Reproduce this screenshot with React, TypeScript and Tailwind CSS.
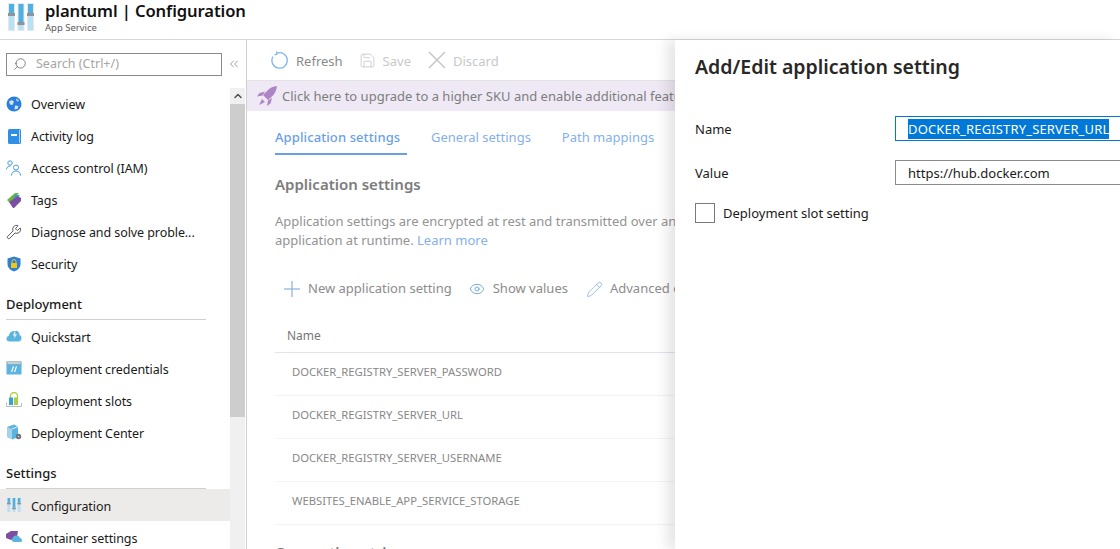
import { ReactNode } from "react";
import { Search, ChevronsLeft, ChevronUp, Eye, Pencil, Save, Wrench } from "lucide-react";

const SlidersIcon = ({ w, h }: { w: number; h: number }) => (
  <svg width={w} height={h} viewBox="0 0 26 28">
    {[0, 9.5, 19].map((x, i) => {
      const handle = i === 1 ? 19 : 10;
      return (
        <g key={x}>
          <rect x={x} y="0" width="7" height="28" fill="#e6e9eb" />
          <rect x={x + 1} y="1" width="5" height={handle - 1} fill="#4fb0e2" />
          <rect x={x + 1} y={handle + 3} width="5" height={24 - handle} fill="#b9e0f4" />
          <rect x={x} y={handle} width="7" height="3" fill="#8f9498" />
        </g>
      );
    })}
  </svg>
);

const OverviewIcon = () => (
  <svg width="16" height="16" viewBox="0 0 16 16">
    <circle cx="8" cy="8" r="7.500" fill="#2b7fdc" />
    <path d="M3 5.500 6 4l2 2-1.500 3L4 8.500z" fill="#cfe6fa" />
    <path d="M10 2.500l3 1.500-1 2-2-1.500z" fill="#9cc9f2" />
    <path d="M9 9.500l3.500.5-1 3-3 .5z" fill="#cfe6fa" />
  </svg>
);

const LogIcon = () => (
  <svg width="16" height="16" viewBox="0 0 16 16">
    <rect x="2" y="1" width="13" height="15" rx="1.500" fill="#2f8fe6" />
    <rect x="13" y="2" width="1" height="13" fill="#a9d4f5" />
    <rect x="5" y="6" width="6" height="2" fill="#fff" />
  </svg>
);

const AccessIcon = () => (
  <svg width="16" height="16" viewBox="0 0 16 16" fill="none" stroke="#4a9fd8" strokeWidth="1">
    <circle cx="4" cy="3" r="2.200" />
    <path d="M.5 9.500C.5 7.500 2 6 4.500 6" />
    <circle cx="10" cy="7.500" r="2.500" />
    <path d="M5.500 15.500c0-3 2-4.500 4.500-4.500s4.500 1.500 4.500 4.500" />
  </svg>
);

const TagIcon = () => (
  <svg width="16" height="16" viewBox="0 0 16 16">
    <path d="M1 8 9 1h4l-9 10z" fill="#6cb33f" />
    <path d="M9 3h5l-8 7z" fill="#2f9fd0" />
    <path d="M3 10l9-6 3 2v3l-7 7h-1z" fill="#7d4fa3" />
  </svg>
);

const ShieldIcon = () => (
  <svg width="16" height="16" viewBox="0 0 16 16">
    <path d="M8 .500 14.500 2.500V8c0 4-3.500 6.500-6.500 7.500C5 14.500 1.500 12 1.500 8V2.500z" fill="#2f7fd8" />
    <rect x="5" y="7" width="6" height="5" rx=".5" fill="#f2c811" />
    <path d="M6 7V5.500a2 2 0 0 1 4 0V7" fill="none" stroke="#f2c811" strokeWidth="1" />
  </svg>
);

const CloudIcon = () => (
  <svg width="16" height="16" viewBox="0 0 16 16">
    <path d="M3.500 13.500C1.500 13.500.5 12.300.5 10.800s1-2.600 2.300-2.700C3.200 5.200 5 3 7.500 3h3c2 0 3 1.800 3 4 1.200.3 2 1.500 2 3.200 0 1.600-1.200 3.300-3 3.300z" fill="#59b4e0" />
    <path d="M9.500 2 7 7.500h2L7.500 11 11 6.500H9z" fill="#fff" />
  </svg>
);

const CredIcon = () => (
  <svg width="16" height="16" viewBox="0 0 16 16">
    <rect x="0.500" y="1.500" width="15" height="13" fill="#59b4e0" />
    <rect x="0.500" y="1.500" width="15" height="3" fill="#a9b0b5" />
    <rect x="1.500" y="2.500" width="13" height="1" fill="#e8eef2" />
    <path d="M5.500 12 7.500 6.500M8.500 12 10.500 6.500" stroke="#fff" strokeWidth="1.200" />
  </svg>
);

const SlotsIcon = () => (
  <svg width="16" height="16" viewBox="0 0 16 16">
    <path d="M4.500 6V4a3.500 3.500 0 0 1 7 0v2" fill="none" stroke="#a8cf45" strokeWidth="1.300" />
    <rect x="3" y="5.500" width="4" height="7.500" fill="#3aa0d8" />
    <rect x="8" y="5.500" width="4" height="7.500" fill="#a8cf45" />
    <path d="M.5 11v3.500h15V11" fill="none" stroke="#b8bcbf" strokeWidth="1" />
  </svg>
);

const CenterIcon = () => (
  <svg width="16" height="16" viewBox="0 0 16 16">
    <path d="M1 3 8 .5l4 2v10l-5 3-6-2.500z" fill="#59b4e0" />
    <path d="M1 3l5 2v10l-5-2z" fill="#a5d4ea" />
    <path d="M6 5l6-2.500" stroke="#e6f3fa" strokeWidth="1" />
    <circle cx="12.500" cy="12.500" r="2.700" fill="#6b7278" />
    <circle cx="12.500" cy="12.500" r=".8" fill="#d5d8da" />
  </svg>
);

const ContainerIcon = () => (
  <svg width="16" height="16" viewBox="0 0 16 16">
    <path d="M0 5 5 2h7l-1 6-6 3-5-2z" fill="#7d4fa3" />
    <path d="M6 11c0-2.500 2-4.500 4.500-4.500 2 0 3 1 3.500 2.500 1 .3 2 1 2 2.500 0 1-.8 1.500-2 1.500H8c-1.500 0-2-1-2-2z" fill="#59b4e0" />
  </svg>
);

const RocketIcon = () => (
  <svg width="21" height="21" viewBox="0 0 21 21">
    <path d="M20 0c-4 .5-7.500 2-10 5L6 9l5 5 4-3.500c3-3 4.500-6.500 5-10.500z" fill="#ad85c4" />
    <path d="M8 5.500 2.500 7 0 10.500l5.500-1zM15 12l-1.500 5.500L10 20l1-5.500zM5 13l-3 6 6-3z" fill="#ad85c4" />
  </svg>
);

const RefreshIcon = () => (
  <svg width="18" height="18" viewBox="0 0 18 18" fill="none" stroke="#7fb5e6" strokeWidth="1.300">
    <path d="M6 2.200A7.700 7.700 0 1 1 2 5.500" />
    <path d="M5.500 .5 6 3 3.500 4" stroke="#7fb5e6" />
  </svg>
);

const CrossIcon = () => (
  <svg width="18" height="18" viewBox="0 0 18 18" stroke="#c6c6c6" strokeWidth="1.500">
    <path d="M1 1 17 17M17 1 1 17" />
  </svg>
);

const PlusIcon = () => (
  <svg width="16" height="16" viewBox="0 0 16 16" strokeWidth="1.200">
    <path d="M0 8H16" stroke="#8ab0de" />
    <path d="M8 0V16" stroke="#8ab0de" />
  </svg>
);

const NavRow = ({ icon, label, active, top }: { icon: ReactNode; label: string; active?: boolean; top?: boolean }) => (
  <div className={`flex items-center h-8 pl-[6px] gap-[9px] text-[12.5px] tracking-[-0.08px] text-[#1a1a1a] ${active ? "bg-[#edebe9]" : ""}`}>
    <span className="w-4 h-4 flex shrink-0 items-center justify-center">{icon}</span>
    <span className={`whitespace-nowrap ${top ? "pt-[3px]" : "pt-[4px]"}`}>{label}</span>
  </div>
);

const NavHeading = ({ label, className }: { label: string; className: string }) => (
  <div className={`ml-[6px] mr-[24px] h-[24px] border-b border-[#cfcfcf] text-[13px] font-medium text-[#1a1a1a] leading-[16px] ${className}`}>
    {label}
  </div>
);

const rows = [
  "DOCKER_REGISTRY_SERVER_PASSWORD",
  "DOCKER_REGISTRY_SERVER_URL",
  "DOCKER_REGISTRY_SERVER_USERNAME",
  "WEBSITES_ENABLE_APP_SERVICE_STORAGE",
];

export default function App() {
  return (
    <div className="relative w-[1120px] h-[549px] overflow-hidden bg-white font-['Noto_Sans',sans-serif]">
      {/* top title */}
      <div className="h-[40px] border-b border-[#d8d8d8] flex items-start pl-[8px] gap-[11px] pt-[3px]">
        <SlidersIcon w={26} h={28} />
        <div className="flex flex-col -mt-[1px]">
          <div className="text-[16.6px] leading-[17px] font-semibold text-[#111] tracking-[-0.1px]">plantuml | Configuration</div>
          <div className="text-[9.5px] leading-[13px] mt-[2px] text-[#5a5a5a]">App Service</div>
        </div>
      </div>

      <div className="flex h-[509px]">
        {/* sidebar */}
        <div className="w-[247px] shrink-0 border-r border-[#cfcfcf] flex flex-col">
          <div className="flex items-center h-[48px] pl-[6px] shrink-0">
            <div className="w-[216px] h-[23px] border border-[#8a8a8a] flex items-center pl-[6px] gap-[9px]">
              <Search size={14} strokeWidth={1.2} color="#555" className="-scale-x-100" />
              <span className="text-[12.5px] text-[#a6a6a6]">Search (Ctrl+/)</span>
            </div>
            <ChevronsLeft size={14} strokeWidth={1.2} color="#777" className="ml-[5px]" />
          </div>
          <div className="flex flex-1 min-h-0">
            <div className="w-[230px] overflow-hidden">
              <NavRow top icon={<OverviewIcon />} label="Overview" />
              <NavRow top icon={<LogIcon />} label="Activity log" />
              <NavRow top icon={<AccessIcon />} label="Access control (IAM)" />
              <NavRow top icon={<TagIcon />} label="Tags" />
              <NavRow top icon={<Wrench size={16} strokeWidth={1.2} color="#333" />} label="Diagnose and solve proble..." />
              <NavRow top icon={<ShieldIcon />} label="Security" />
              <NavHeading label="Deployment" className="mt-[16px]" />
              <NavRow icon={<CloudIcon />} label="Quickstart" />
              <NavRow icon={<CredIcon />} label="Deployment credentials" />
              <NavRow icon={<SlotsIcon />} label="Deployment slots" />
              <NavRow icon={<CenterIcon />} label="Deployment Center" />
              <NavHeading label="Settings" className="mt-[17px]" />
              <NavRow icon={<SlidersIcon w={14} h={16} />} label="Configuration" active />
              <NavRow icon={<ContainerIcon />} label="Container settings" />
            </div>
            <div className="w-[15px] bg-[#f0f0f0] flex flex-col">
              <div className="h-[16px] flex items-center justify-center">
                <ChevronUp size={12} strokeWidth={3} color="#505050" />
              </div>
              <div className="h-[313px] bg-[#cdcdcd]" />
            </div>
          </div>
        </div>

        {/* main blade, faded behind the panel */}
        <div className="flex-1 min-w-0 overflow-hidden">
          <div className="h-[41px] border-b border-[#e4e4e4] flex items-center pl-[24px] text-[13px]">
            <RefreshIcon />
            <span className="ml-[7px] pt-[3px] text-[#8a8a8a]">Refresh</span>
            <Save size={17} strokeWidth={1.2} color="#c8c8c8" className="ml-[16px]" />
            <span className="ml-[7px] pt-[3px] text-[#c8c8c8]">Save</span>
            <span className="ml-[17px]"><CrossIcon /></span>
            <span className="ml-[7px] pt-[3px] text-[#c8c8c8]">Discard</span>
          </div>
          <div className="h-[30px] bg-[#efe9f5] flex items-center pl-[10px] gap-[4px] text-[13px] text-[#7d7d7d] whitespace-nowrap">
            <RocketIcon />
            <span className="pt-[2px]">Click here to upgrade to a higher SKU and enable additional features</span>
          </div>
          <div className="pl-[28px]">
            <div className="flex h-[44px] text-[13px] text-[#6a9fe8] items-start">
              <div className="h-[44px] pt-[17px] border-b-2 border-[#6a9fe8] w-[132px] font-medium leading-[18px] tracking-[0.1px] whitespace-nowrap">Application settings</div>
              <div className="ml-[24px] pt-[17px] leading-[18px] text-[#85b0eb]">General settings</div>
              <div className="ml-[31px] pt-[17px] leading-[18px] text-[#85b0eb]">Path mappings</div>
            </div>
            <div className="mt-[18px] text-[15px] leading-[22px] font-semibold text-[#7c7c7c]">Application settings</div>
            <div className="mt-[17px] text-[13px] leading-[19px] text-[#939393] whitespace-nowrap">
              <div>Application settings are encrypted at rest and transmitted over an encrypted channel.</div>
              <div>application at runtime. <span className="text-[#85b0eb]">Learn more</span></div>
            </div>
            <div className="mt-[27px] h-[24px] flex items-center pl-[9px] text-[13px] text-[#8c8c8c] whitespace-nowrap">
              <PlusIcon />
              <span className="ml-[8px]">New application setting</span>
              <Eye size={16} strokeWidth={1.4} color="#6aa5dc" className="ml-[17px]" />
              <span className="ml-[8px]">Show values</span>
              <Pencil size={17} strokeWidth={1.1} color="#7fb2e5" className="ml-[18px]" />
              <span className="ml-[7px]">Advanced edit</span>
            </div>
            <div className="mt-[20px] h-[32px] border-b border-[#e3e3ea] pl-[12px] pb-[2px] text-[12px] text-[#777] flex items-center">Name</div>
            {rows.map((r) => (
              <div key={r} className="h-[43px] border-b border-[#f3f3f3] pl-[17px] pb-[3px] text-[11.25px] text-[#888] flex items-center whitespace-nowrap">
                {r}
              </div>
            ))}
            <div className="mt-[16px] text-[15px] leading-[22px] font-semibold text-[#7c7c7c]">Connection strings</div>
          </div>
        </div>
      </div>

      {/* Add/Edit panel laid over the blade */}
      <div className="absolute left-[675px] top-[40px] bottom-0 right-0 bg-white shadow-[-8px_0_12px_rgba(0,0,0,0.10)] pl-[20px]">
        <div className="pt-[14px] text-[19.5px] leading-[26px] font-semibold text-[#292827]">Add/Edit application setting</div>
        <div className="mt-[36px] flex items-center h-[25px]">
          <div className="w-[200px] shrink-0 pt-[2px] text-[13px] text-[#1a1a1a]">Name</div>
          <div className="w-[240px] shrink-0 h-[25px] border border-[#0078d4] pl-[12px] flex items-center text-[13px] whitespace-nowrap">
            <span className="bg-[#0078d7] text-white tracking-[0.15px] leading-[19px] pt-[1px]">DOCKER_REGISTRY_SERVER_URL</span>
          </div>
        </div>
        <div className="mt-[19px] flex items-center h-[25px]">
          <div className="w-[200px] shrink-0 pt-[2px] text-[13px] text-[#1a1a1a]">Value</div>
          <div className="w-[240px] shrink-0 h-[25px] border border-[#8a8a8a] pl-[12px] flex items-center text-[13px] text-[#1a1a1a]">
            <span className="pt-[2px]">https://hub.docker.com</span>
          </div>
        </div>
        <div className="mt-[17px] flex items-center gap-[8px]">
          <div className="w-[20px] h-[20px] border border-[#7a7a7a]" />
          <span className="pt-[2px] text-[13px] text-[#1a1a1a]">Deployment slot setting</span>
        </div>
      </div>
    </div>
  );
}
